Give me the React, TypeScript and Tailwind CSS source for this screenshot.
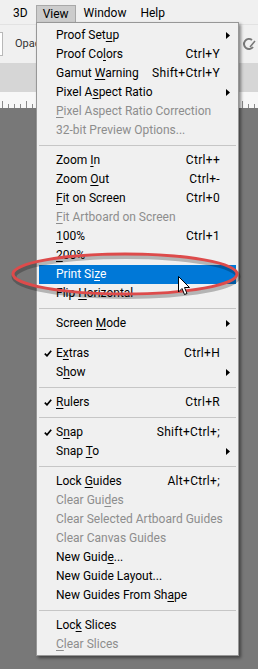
import React from 'react';

type Item =
  | { sep: true }
  | {
      sep?: false;
      label: string;
      shortcut?: string;
      arrow?: boolean;
      disabled?: boolean;
      checked?: boolean;
      active?: boolean;
    };

const items: Item[] = [
  { label: 'Proof Set&up', arrow: true },
  { label: 'Proof Co&lors', shortcut: 'Ctrl+Y' },
  { label: 'Gamut &Warning', shortcut: 'Shift+Ctrl+Y' },
  { label: 'Pixel A&spect Ratio', arrow: true },
  { label: '&Pixel Aspect Ratio Correction', disabled: true },
  { label: '32-bit Preview Options...', disabled: true },
  { sep: true },
  { label: 'Zoom &In', shortcut: 'Ctrl++' },
  { label: 'Zoom &Out', shortcut: 'Ctrl+-' },
  { label: '&Fit on Screen', shortcut: 'Ctrl+0' },
  { label: '&Fit Artboard on Screen', disabled: true },
  { label: '&100%', shortcut: 'Ctrl+1' },
  { label: '&200%' },
  { label: 'Print Si&ze', active: true },
  { label: 'Flip &Horizontal' },
  { sep: true },
  { label: 'Screen &Mode', arrow: true },
  { sep: true },
  { label: 'E&xtras', shortcut: 'Ctrl+H', checked: true },
  { label: 'S&how', arrow: true },
  { sep: true },
  { label: '&Rulers', shortcut: 'Ctrl+R', checked: true },
  { sep: true },
  { label: 'S&nap', shortcut: 'Shift+Ctrl+;', checked: true },
  { label: 'Snap &To', arrow: true },
  { sep: true },
  { label: 'Lock &Guides', shortcut: 'Alt+Ctrl+;' },
  { label: 'Clear Gui&des', disabled: true },
  { label: 'Clear Selected Artboard Guides', disabled: true },
  { label: 'Clear Canvas Guides', disabled: true },
  { label: 'New Guid&e...' },
  { label: 'New Guide Layout...' },
  { label: 'New Guides From Sh&ape' },
  { sep: true },
  { label: 'Loc&k Slices' },
  { label: '&Clear Slices', disabled: true },
];

// "&" marks the mnemonic letter
function Mnemonic({ text }: { text: string }) {
  const i = text.indexOf('&');
  if (i < 0) return <>{text}</>;
  return (
    <>
      {text.slice(0, i)}
      <span className="underline decoration-1 underline-offset-[2px]">{text[i + 1]}</span>
      {text.slice(i + 2)}
    </>
  );
}

function Ruler() {
  const ticks = Array.from({ length: 45 }, (_, i) => i * 6 + 2);
  return (
    <svg width="258" height="16" className="block">
      {ticks.map((x, i) => (
        <line key={i} x1={x + 0.5} x2={x + 0.5} y1={i % 4 === 0 ? 9 : 12} y2={16} stroke="#8a8a8a" strokeWidth="1" />
      ))}
    </svg>
  );
}

export default function App() {
  return (
    <div
      className="relative w-[258px] h-[669px] overflow-hidden bg-[#787878] text-[12px] text-black"
      style={{ fontFamily: 'Roboto, "Noto Sans", sans-serif' }}
    >
      {/* menu bar */}
      <div className="h-[24px] bg-[#f0f0f0] flex items-start pt-[5px]">
        <span className="ml-[13px] leading-[17px]">3D</span>
        <span className="ml-[8px] px-[6px] h-[18px] leading-[17px] bg-[#cccccc] border border-[#a8a8a8]">View</span>
        <span className="ml-[8px] leading-[17px]">Window</span>
        <span className="ml-[14px] leading-[17px]">Help</span>
      </div>

      {/* options bar */}
      <div className="h-[39px] bg-[#f0f0f0] border-t border-[#e2e2e2] flex items-center">
        <div className="w-[3px] h-[24px] bg-white border border-[#b8b8b8] border-l-0" />
        <span className="ml-[12px] text-[11px] text-[#333]">Opacity:</span>
        <div className="ml-auto mr-[2px]">
          <svg width="14" height="14" viewBox="0 0 14 14">
            <path d="M10 3 A5 5 0 1 0 11 10" fill="none" stroke="#777" strokeWidth="2" />
            <path d="M8 10 L13 4" stroke="#777" strokeWidth="1.5" />
          </svg>
        </div>
      </div>

      {/* tab band */}
      <div className="h-[29px] bg-[#d6d6d6]" />

      {/* ruler */}
      <div className="h-[16px] bg-[#f7f7f7]">
        <Ruler />
      </div>

      {/* View menu */}
      <div className="absolute left-[36px] top-[22px] w-[203px] bg-[#f0f0f0] border border-[#979797] pt-[3px] pb-[1px] px-[2px] shadow-[2px_2px_3px_rgba(0,0,0,0.45)]">
        {items.map((it, i) =>
          it.sep ? (
            <div key={i} className="h-[11px] flex items-center">
              <div className="w-full h-px bg-[#c6c6c6]" />
            </div>
          ) : (
            <div
              key={i}
              className={`h-[19px] flex items-center whitespace-nowrap ${
                it.active ? 'bg-[#0078d7] text-white' : it.disabled ? 'text-[#8d8d8d]' : ''
              }`}
            >
              <div className="w-[17px] shrink-0 flex justify-center pl-[1px]">
                {it.checked && (
                  <svg width="8" height="7" viewBox="0 0 8 7">
                    <path d="M0.8 3.6 L3 5.8 L7.2 0.8" fill="none" stroke="#000" strokeWidth="1.7" />
                  </svg>
                )}
              </div>
              <span className="flex-1 leading-[19px]">
                <Mnemonic text={it.label} />
              </span>
              {it.shortcut && <span className="leading-[19px] tracking-[0.3px]">{it.shortcut}</span>}
              <div className="w-[16px] shrink-0 flex justify-end pr-[6px]">
                {it.arrow && (
                  <svg width="4" height="7" viewBox="0 0 4 7">
                    <path d="M0 0 L4 3.5 L0 7 Z" fill="#000" />
                  </svg>
                )}
              </div>
            </div>
          )
        )}
      </div>

      {/* red annotation ellipse */}
      <svg className="absolute left-0 top-0 pointer-events-none" width="258" height="669">
        <ellipse cx="125" cy="274.5" rx="112" ry="20" fill="none" stroke="rgba(0,0,0,0.25)" strokeWidth="5" transform="translate(1 2)" />
        <ellipse cx="125" cy="274" rx="112" ry="20" fill="none" stroke="#dd4b4b" strokeWidth="3" />
      </svg>

      {/* mouse cursor */}
      <svg className="absolute left-[178px] top-[276px]" width="13" height="20" viewBox="0 0 13 20">
        <path d="M0.5 0.5 L0.5 16 L4 12.5 L6.5 18.5 L9 17.5 L6.5 11.5 L11.5 11.5 Z" fill="#fff" stroke="#000" strokeWidth="1" />
      </svg>
    </div>
  );
}
